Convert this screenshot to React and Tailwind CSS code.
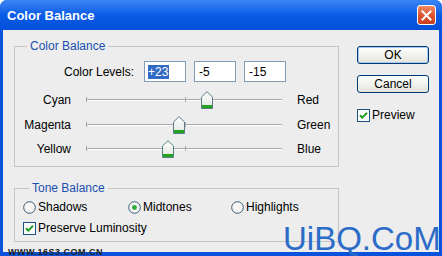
import React from "react";

function Thumb({ left }) {
  return (
    <svg
      width="12"
      height="18"
      viewBox="0 0 12 18"
      className="absolute top-[1px]"
      style={{ left: left - 6 }}
    >
      <defs>
        <linearGradient id="tg" x1="0" y1="0" x2="0" y2="1">
          <stop offset="0" stopColor="#ffffff" />
          <stop offset="1" stopColor="#e2e6e2" />
        </linearGradient>
      </defs>
      <path
        d="M0.5 6 L6 0.7 L11.5 6 L11.5 17.5 L0.5 17.5 Z"
        fill="url(#tg)"
        stroke="#5b7d86"
        strokeWidth="1"
      />
      <rect x="1" y="14" width="10" height="3" fill="#22a322" />
    </svg>
  );
}

function SliderRow({ left, right, thumb, first }) {
  return (
    <div className={`flex items-center h-[20px] ${first ? "mt-[8px]" : "mt-[5px]"}`}>
      <div className="w-[56px] text-right leading-[14px]">{left}</div>
      <div className="ml-[15px] w-[196px] h-[20px] relative">
        <div className="absolute left-0 right-0 top-[9px] h-[1px] bg-[#a8a8a8]" />
        <div className="absolute left-0 right-0 top-[10px] h-[1px] bg-white" />
        <div className="absolute left-0 top-[7px] w-[1px] h-[5px] bg-[#a8a8a8]" />
        <div className="absolute left-[99px] top-[7px] w-[1px] h-[5px] bg-[#a8a8a8]" />
        <Thumb left={thumb} />
      </div>
      <div className="ml-[15px] leading-[14px]">{right}</div>
    </div>
  );
}

function Check() {
  return (
    <svg width="13" height="13" viewBox="0 0 13 13" className="shrink-0">
      <rect x="0.5" y="0.5" width="12" height="12" fill="#fafafa" stroke="#1c5180" />
      <path d="M3 6.2 L5.3 8.6 L10 3.8" fill="none" stroke="#21a121" strokeWidth="2" />
    </svg>
  );
}

function Radio({ on }) {
  return (
    <svg width="13" height="13" viewBox="0 0 13 13" className="shrink-0">
      <circle cx="6.5" cy="6.5" r="5.8" fill="#f6f6f4" stroke="#3a5a78" strokeWidth="1" />
      {on && <circle cx="6.5" cy="6.5" r="2.4" fill="#2bab3a" />}
    </svg>
  );
}

export default function App() {
  return (
    <div className="w-[442px] h-[256px] relative overflow-hidden bg-[#0a52dc] rounded-t-[7px] flex flex-col font-['Liberation_Sans',Arial,sans-serif] text-[12px] text-black">
      <div className="h-[30px] shrink-0 bg-gradient-to-b from-[#3a86f4] via-[#0a5be6] to-[#0550da] flex items-center justify-between pl-[7px] pr-[6px]">
        <div className="text-[13px] font-bold text-white leading-[16px] mt-[1px]">Color Balance</div>
        <div className="w-[19px] h-[20px] rounded-[3px] border border-white bg-gradient-to-b from-[#ee8a66] via-[#dd5530] to-[#c8401c] flex items-center justify-center">
          <svg width="11" height="11" viewBox="0 0 11 11">
            <path d="M1.5 1.5 L9.5 9.5 M9.5 1.5 L1.5 9.5" stroke="white" strokeWidth="2" strokeLinecap="square" />
          </svg>
        </div>
      </div>
      <div className="h-[222px] mx-[3px] bg-[#ededed] flex items-start pt-[9px]">
        <div className="ml-[11px] w-[325px] flex flex-col">
          <fieldset className="border border-[#c6c6bf] pb-[7px] m-0 p-0">
            <legend className="ml-[12px] px-[3px] leading-[14px] text-[#1a4fb0]">Color Balance</legend>
            <div className="flex items-center h-[21px] mt-[8px]">
              <div className="w-[119px] text-right leading-[14px]">Color Levels:</div>
              <div className="ml-[10px] flex gap-[8px]">
                <div className="w-[42px] h-[21px] border border-[#7f9db9] bg-white flex items-center pl-[3px]">
                  <span className="bg-[#316ac5] text-white leading-[14px] pr-[1px]">+23</span>
                </div>
                <div className="w-[42px] h-[21px] border border-[#7f9db9] bg-white flex items-center pl-[4px] leading-[14px]">-5</div>
                <div className="w-[42px] h-[21px] border border-[#7f9db9] bg-white flex items-center pl-[4px] leading-[14px]">-15</div>
              </div>
            </div>
            <SliderRow left="Cyan" right="Red" thumb={121} first />
            <SliderRow left="Magenta" right="Green" thumb={93} />
            <div className="mt-[-1px]">
              <SliderRow left="Yellow" right="Blue" thumb={82} />
            </div>
          </fieldset>
          <fieldset className="border border-[#c6c6bf] mt-[14px] pb-[6px] m-0 p-0">
            <legend className="ml-[14px] px-[3px] leading-[14px] text-[#1a4fb0]">Tone Balance</legend>
            <div className="flex items-center h-[14px] mt-[5px] pl-[8px]">
              <div className="w-[105px] flex items-center gap-[2px]">
                <Radio />
                <span className="leading-[14px]">Shadows</span>
              </div>
              <div className="w-[103px] flex items-center gap-[2px]">
                <Radio on />
                <span className="leading-[14px]">Midtones</span>
              </div>
              <div className="flex items-center gap-[2px]">
                <Radio />
                <span className="leading-[14px]">Highlights</span>
              </div>
            </div>
            <div className="flex items-center h-[14px] mt-[7px] pl-[8px] gap-[2px]">
              <Check />
              <span className="leading-[14px]">Preserve Luminosity</span>
            </div>
          </fieldset>
        </div>
        <div className="ml-[18px] mt-[7px] flex flex-col">
          <div className="w-[72px] h-[18px] rounded-[3px] border border-[#003c74] bg-gradient-to-b from-white to-[#e4e4dc] shadow-[inset_0_0_0_1px_#a9c6f0] flex items-center justify-center leading-[14px]">OK</div>
          <div className="w-[72px] h-[18px] mt-[11px] rounded-[3px] border border-[#003c74] bg-gradient-to-b from-white to-[#e4e4dc] flex items-center justify-center leading-[14px]">Cancel</div>
          <div className="flex items-center h-[14px] mt-[15px] gap-[2px]">
            <Check />
            <span className="leading-[14px]">Preview</span>
          </div>
        </div>
      </div>
      <div className="absolute left-[283px] top-[222px] text-[33px] leading-[33px] text-[#2a6cc8] font-['Liberation_Sans',Arial,sans-serif]">UiBQ.CoM</div>
      <div className="absolute left-[8px] top-[247px] text-[9px] leading-[10px] font-bold text-[#222] tracking-[0.5px]">WWW.16S3.COM.CN</div>
    </div>
  );
}
